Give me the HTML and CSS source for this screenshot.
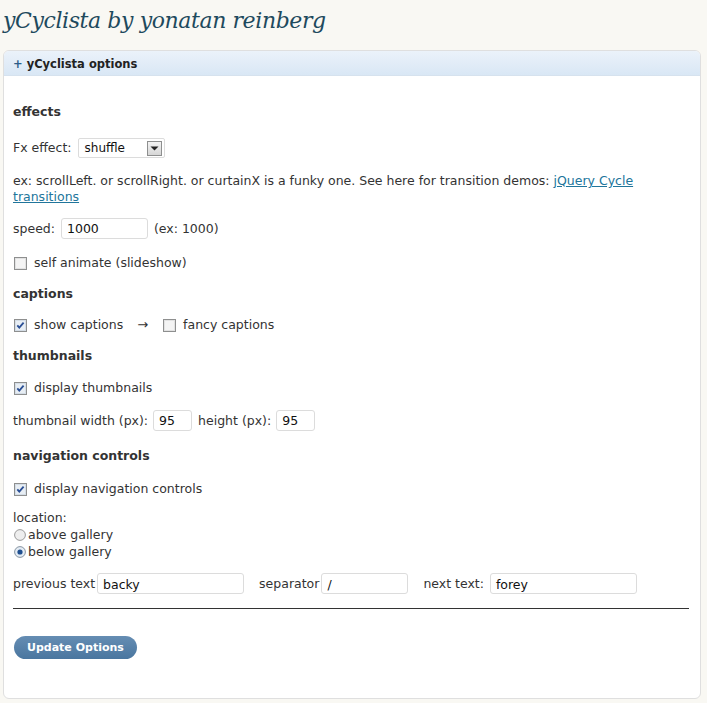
FILE: index.html
```html
<!DOCTYPE html>
<html>
<head>
<meta charset="utf-8">
<link rel="stylesheet" href="styles.css">
</head>
<body>
<h2 class="title">yCyclista by yonatan reinberg</h2>
<div class="panel">
  <div class="panel-head"><span class="plus">+</span> yCyclista options</div>
  <div class="panel-body">
    <h3 class="sec first">effects</h3>
    <div class="row fx">
      <span>Fx effect:</span>
      <span class="select"><span class="sel-text">shuffle</span><span class="sel-btn"><svg width="9" height="5" viewBox="0 0 9 5"><path d="M0.5 0.5 H8.5 L4.5 4.5 Z" fill="#222"/></svg></span></span>
    </div>
    <p class="note">ex: scrollLeft. or scrollRight. or curtainX is a funky one. See here for transition demos: <a href="#">jQuery Cycle transitions</a></p>
    <div class="row speed">
      <span>speed:</span>
      <span class="inp w87">1000</span>
      <span>(ex: 1000)</span>
    </div>
    <div class="row check animate">
      <svg class="cb" width="13" height="13" viewBox="0 0 13 13"><rect x="0.5" y="0.5" width="12" height="12" fill="#f4f4f4" stroke="#8e8f8f"/><rect x="1.5" y="1.5" width="10" height="10" fill="none" stroke="#e2e2e2"/></svg>
      <span>self animate (slideshow)</span>
    </div>
    <h3 class="sec">captions</h3>
    <div class="row check mid">
      <svg class="cb" width="13" height="13" viewBox="0 0 13 13"><rect x="0.5" y="0.5" width="12" height="12" fill="#e8eef4" stroke="#8e8f8f"/><rect x="1.5" y="1.5" width="10" height="10" fill="none" stroke="#d4dde6"/><path d="M3.3 6.3 L5.3 8.6 L9.6 3.6" fill="none" stroke="#2a4f95" stroke-width="1.8"/></svg>
      <span>show captions</span>
      <span class="arrow">→</span>
      <svg class="cb" width="13" height="13" viewBox="0 0 13 13"><rect x="0.5" y="0.5" width="12" height="12" fill="#f4f4f4" stroke="#8e8f8f"/><rect x="1.5" y="1.5" width="10" height="10" fill="none" stroke="#e2e2e2"/></svg>
      <span>fancy captions</span>
    </div>
    <h3 class="sec">thumbnails</h3>
    <div class="row check mid2">
      <svg class="cb" width="13" height="13" viewBox="0 0 13 13"><rect x="0.5" y="0.5" width="12" height="12" fill="#e8eef4" stroke="#8e8f8f"/><rect x="1.5" y="1.5" width="10" height="10" fill="none" stroke="#d4dde6"/><path d="M3.3 6.3 L5.3 8.6 L9.6 3.6" fill="none" stroke="#2a4f95" stroke-width="1.8"/></svg>
      <span>display thumbnails</span>
    </div>
    <div class="row thumbs">
      <span>thumbnail width (px):</span>
      <span class="inp w39">95</span>
      <span>height (px):</span>
      <span class="inp w39">95</span>
    </div>
    <h3 class="sec nav">navigation controls</h3>
    <div class="row check navc">
      <svg class="cb" width="13" height="13" viewBox="0 0 13 13"><rect x="0.5" y="0.5" width="12" height="12" fill="#e8eef4" stroke="#8e8f8f"/><rect x="1.5" y="1.5" width="10" height="10" fill="none" stroke="#d4dde6"/><path d="M3.3 6.3 L5.3 8.6 L9.6 3.6" fill="none" stroke="#2a4f95" stroke-width="1.8"/></svg>
      <span>display navigation controls</span>
    </div>
    <div class="location">
      <div>location:</div>
      <div class="radio"><svg width="12" height="12" viewBox="0 0 12 12"><circle cx="6" cy="6" r="5.4" fill="#eee" stroke="#8e8f8f" stroke-width="0.9"/></svg><span>above gallery</span></div>
      <div class="radio"><svg width="12" height="12" viewBox="0 0 12 12"><circle cx="6" cy="6" r="5.4" fill="#e4ecf4" stroke="#7c8a99" stroke-width="0.9"/><circle cx="6" cy="6" r="2.6" fill="#1f4f8f"/></svg><span>below gallery</span></div>
    </div>
    <div class="row texts">
      <span>previous text</span>
      <span class="inp w147 tight">backy</span>
      <span class="gap14">separator</span>
      <span class="inp w87 tight">/</span>
      <span class="gap14">next text:</span>
      <span class="inp w147">forey</span>
    </div>
    <div class="rule"></div>
    <div class="btn-row"><span class="button">Update Options</span></div>
  </div>
</div>
</body>
</html>
```
FILE: styles.css
```css
html, body {
  margin: 0;
  padding: 0;
}
body {
  background: #f9f8f3;
  font-family: "DejaVu Sans", Verdana, sans-serif;
  font-size: 12.5px;
  color: #333;
  width: 707px;
  height: 703px;
  overflow: hidden;
}
.title {
  margin: 0;
  padding: 6px 0 0 3px;
  height: 45px;
  box-sizing: border-box;
  font-family: "DejaVu Serif", Georgia, serif;
  font-style: italic;
  font-weight: normal;
  font-size: 22px;
  line-height: 30px;
  color: #1e4a5d;
  letter-spacing: -0.4px;
}
.panel {
  margin: 5px 0 0 3px;
  width: 698px;
  height: 649px;
  box-sizing: border-box;
  border: 1px solid #dfdfdf;
  border-radius: 6px;
  background: #fff;
  overflow: hidden;
}
.panel-head {
  height: 25px;
  box-sizing: border-box;
  background: linear-gradient(#ebf2fa, #d9e7f5);
  border-bottom: 1px solid #d6e2ee;
  padding-left: 9px;
  font-size: 11.5px;
  font-weight: bold;
  line-height: 26px;
  color: #222;
}
.plus {
  color: #2b5d8a;
}
.panel-body {
  padding: 0 0 0 9px;
}
.sec {
  margin: 15px 0 0;
  font-size: 12.5px;
  font-weight: bold;
  line-height: 16px;
  color: #333;
}
.sec.first { margin-top: 28px; }
.sec.nav { margin-top: 17px; }
.row {
  display: flex;
  align-items: center;
  line-height: 16px;
}
.fx { margin-top: 18px; height: 20px; gap: 6px; }
.select {
  width: 87px;
  height: 20px;
  box-sizing: border-box;
  border: 1px solid #dcdcdc;
  border-radius: 2px;
  background: #fff;
  display: flex;
  align-items: center;
  justify-content: space-between;
  padding: 0 2px 0 6px;
  font-size: 12px;
  color: #111;
}
.sel-btn {
  width: 15px;
  height: 15px;
  box-sizing: border-box;
  border: 1px solid #8e8f8f;
  background: linear-gradient(#f3f3f3, #d6d6d6);
  display: flex;
  align-items: center;
  justify-content: center;
}
.note {
  margin: 15px 0 0;
  line-height: 16px;
  padding-right: 40px;
}
.note a {
  color: #21759b;
  text-decoration: underline;
}
.speed { margin-top: 13px; height: 21px; gap: 6px; }
.inp {
  height: 21px;
  box-sizing: border-box;
  border: 1px solid #dcdcdc;
  border-radius: 3px;
  background: #fff;
  padding: 0 5px;
  font-size: 12.5px;
  line-height: 20px;
  color: #111;
}
.w87 { width: 87px; }
.w39 { width: 39px; }
.w147 { width: 147px; }
.check { gap: 7px; }
.cb { display: block; margin-left: 1px; }
.animate { margin-top: 16px; }
.mid { margin-top: 15px; }
.mid .arrow { margin: 0 7px 0 7px; font-size: 13px; }
.mid2 { margin-top: 16px; }
.thumbs { margin-top: 14px; height: 21px; gap: 5px; }
.thumbs .inp + span { margin-left: 1px; }
.navc { margin-top: 17px; }
.location {
  margin-top: 12px;
  line-height: 17px;
}
.radio {
  display: flex;
  align-items: center;
  gap: 2px;
}
.radio svg { display: block; margin-left: 1px; }
.texts { margin-top: 13px; height: 21px; gap: 6px; }
.texts .tight { margin-left: -4px; }
.texts .gap14 { margin-left: 9px; }
.texts .inp { line-height: 21px; }
.rule {
  margin-top: 14px;
  width: 676px;
  height: 1px;
  background: #333;
}
.btn-row {
  margin-top: 27px;
  padding-left: 1px;
}
.button {
  display: inline-block;
  height: 23px;
  padding: 0 13px;
  border-radius: 12px;
  background: linear-gradient(#658db3, #4a769f);
  color: #fff;
  font-size: 11px;
  font-weight: bold;
  line-height: 23px;
}
```
